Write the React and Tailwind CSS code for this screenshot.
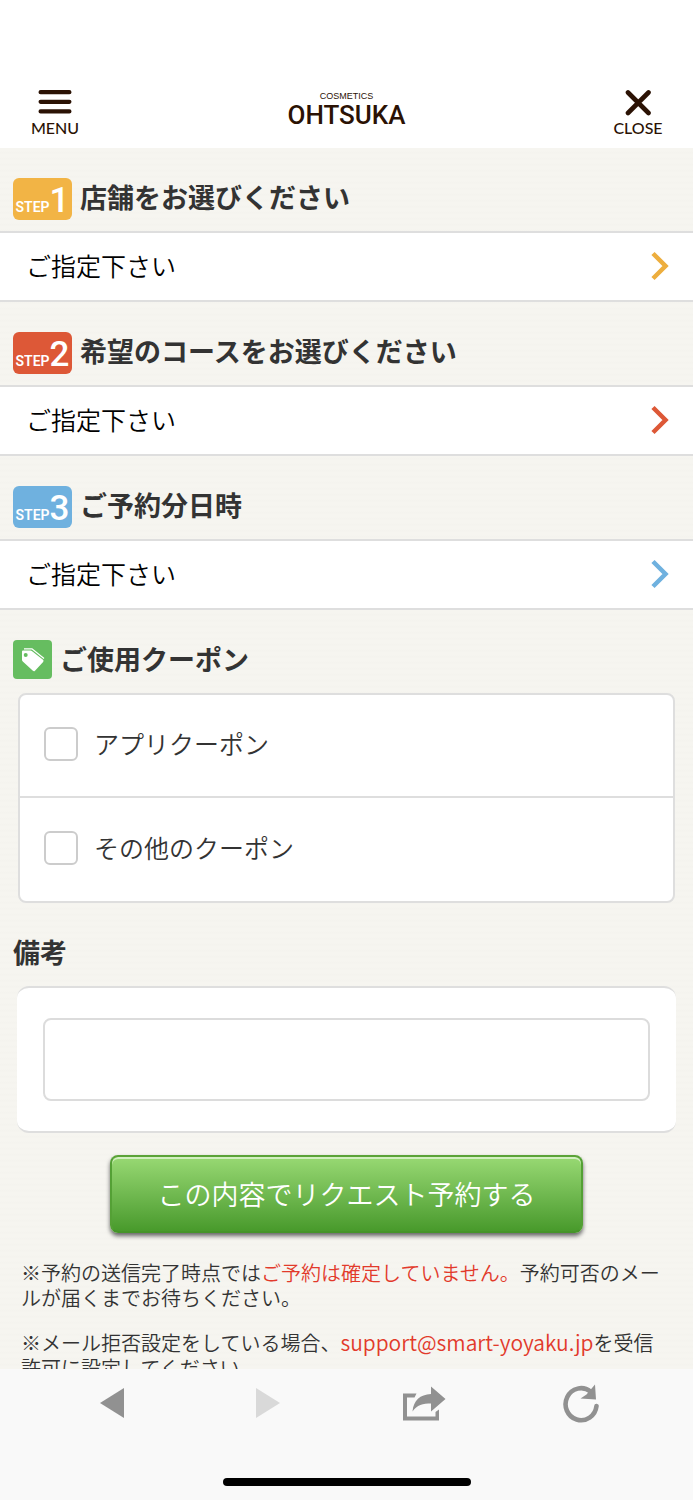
import React, { useState } from "react";

const steps = [
  { id: 1, title: "店舗をお選びください", badge: "bg-[#f2b445]", arrow: "text-[#edae3e]" },
  { id: 2, title: "希望のコースをお選びください", badge: "bg-[#dd5837]", arrow: "text-[#dd5837]" },
  { id: 3, title: "ご予約分日時", badge: "bg-[#6fb1df]", arrow: "text-[#6fb1df]" },
];

const coupons = [
  { id: "app", label: "アプリクーポン" },
  { id: "other", label: "その他のクーポン" },
];

const Header = () => (
  <header className="flex h-[148px] shrink-0 items-end justify-between bg-white px-8 pb-2 text-[#2b1204]">
    <button type="button" className="flex w-[46px] flex-col items-center">
      <svg width="34" height="28" viewBox="0 0 34 28" stroke="currentColor" strokeWidth="4.2" strokeLinecap="round">
        <path d="M2.600 4.200h28.800M2.600 13.800h28.800M2.600 23.400h28.800" />
      </svg>
      <span className="font-[Lato,sans-serif] text-[16px] leading-6 font-medium">MENU</span>
    </button>

    <a href="#top" className="flex flex-col items-center pb-[11px]">
      <span className="font-[Liberation_Sans,Arial,sans-serif] text-[9px] leading-[10px]">COSMETICS</span>
      <span className="font-[Roboto,sans-serif] text-[26px] leading-7 font-medium">OHTSUKA</span>
    </a>

    <button type="button" className="flex w-[46px] flex-col items-center">
      <svg width="34" height="28" viewBox="0 0 34 28" stroke="currentColor" strokeWidth="4.6" strokeLinecap="round">
        <path d="M7 4.500l20.500 20.500M27.500 4.500L7 25" />
      </svg>
      <span className="font-[Lato,sans-serif] text-[16px] leading-6 font-medium">CLOSE</span>
    </button>
  </header>
);

const StepSection = ({ step }) => (
  <section>
    <div className="flex h-[83px] items-center gap-2 px-[13px] pt-[18px]">
      <span
        className={`flex h-[42px] w-[59px] shrink-0 items-baseline justify-center rounded-md font-[Roboto,sans-serif] font-semibold text-white ${step.badge}`}
      >
        <span className="text-[14px]">STEP</span>
        <span className="text-[35px] leading-[45px] font-medium">{step.id}</span>
      </span>
      <h2 className="pb-1 text-[27px] leading-9 font-bold">{step.title}</h2>
    </div>
    <button
      type="button"
      className="flex h-[71px] w-full items-center justify-between border-t-2 border-b-2 border-[#dedede] bg-white pr-[23px] pb-[2px] pl-[26px] text-[25px] text-black"
    >
      <span>ご指定下さい</span>
      <svg className={step.arrow} width="20" height="30" viewBox="0 0 20 30" fill="none" stroke="currentColor" strokeWidth="4.500">
        <path d="M3 2.500L15.500 15L3 27.500" />
      </svg>
    </button>
  </section>
);

const Toolbar = () => (
  <footer className="shrink-0 bg-[#f9f9f9]">
    <nav className="flex h-[68px] items-center justify-between px-[89px] text-[#919191]">
      <button type="button" aria-label="戻る">
        <svg width="46" height="40" viewBox="0 0 46 40" fill="currentColor">
          <path d="M11 20L35 5v30z" />
        </svg>
      </button>
      <button type="button" aria-label="進む" className="text-[#d9d9d9]" disabled>
        <svg width="46" height="40" viewBox="0 0 46 40" fill="currentColor">
          <path d="M35 20L11 5v30z" />
        </svg>
      </button>
      <button type="button" aria-label="共有">
        <svg width="46" height="40" viewBox="0 0 46 40" fill="currentColor">
          <path d="M1 10.500h13.500l-2 4H5v19h28.500v-4.500l3.500-2.500V37.500H1z" />
          <path d="M29 3.500l14.500 12.500L29 28.500v-8c-8 0-14 1.500-18.500 8 1-11 7.500-17 18.500-17.500z" />
        </svg>
      </button>
      <button type="button" aria-label="再読み込み">
        <svg width="46" height="40" viewBox="0 0 46 40" fill="none">
          <path d="M32.500 8.500A15.500 16 0 1 0 38.500 23" stroke="currentColor" strokeWidth="4.600" strokeLinecap="round" />
          <path d="M37 1.500l1 15-15.500-1 6-4z" fill="currentColor" />
        </svg>
      </button>
    </nav>
    <div className="flex h-[63px] items-end justify-center pb-[14px]">
      <div className="h-2 w-[248px] rounded-full bg-black" />
    </div>
  </footer>
);

export default function App() {
  const [checked, setChecked] = useState({});
  const [note, setNote] = useState("");

  const toggle = (id) => setChecked({ ...checked, [id]: !checked[id] });

  return (
    <div
      lang="ja"
      className="flex h-screen flex-col bg-[#f5f4ef] font-['Noto_Sans_CJK_JP',sans-serif] font-[350] text-[#333]"
    >
      <Header />

      <main className="min-h-0 flex-1 overflow-y-auto bg-[repeating-linear-gradient(0deg,#f6f5f0_0px,#f6f5f0_3px,#f4f3ee_4px,#f6f5f0_6px)] [scrollbar-width:none]">
        {steps.map((step) => (
          <StepSection key={step.id} step={step} />
        ))}

        {/* Coupons */}
        <section>
          <div className="flex h-[83px] items-center gap-2 px-[13px] pt-4">
            <span className="flex size-[39px] shrink-0 items-center justify-center rounded bg-[#66bd60]">
              <svg width="24" height="24" viewBox="0 0 24 24">
                <path d="M3 .8h8l12 9.600" fill="none" stroke="#fff" strokeWidth="1.300" />
                <path
                  fill="#fff"
                  fillRule="evenodd"
                  d="M2 2.500h7.500a2 2 0 0 1 1.300.5L22 11.800a1.500 1.500 0 0 1 .1 2.100L14 22.700a1.500 1.500 0 0 1-2.100.1L1.800 13.500A2 2 0 0 1 1 12V3.500a1 1 0 0 1 1-1zM4.700 5a2 2 0 1 0 0 4 2 2 0 0 0 0-4z"
                />
              </svg>
            </span>
            <h2 className="pb-[2px] text-[27px] leading-9 font-bold">ご使用クーポン</h2>
          </div>
          <div className="mx-[18px] divide-y-2 divide-[#dedede] rounded-lg border-2 border-[#dedede] bg-white">
            {coupons.map((coupon) => (
              <label key={coupon.id} className="flex h-[103px] items-center gap-4 px-6 pb-[3px] text-[25px]">
                <input
                  type="checkbox"
                  checked={!!checked[coupon.id]}
                  onChange={() => toggle(coupon.id)}
                  className="size-[34px] shrink-0 appearance-none rounded-md border-2 border-[#cccccc] bg-white checked:bg-[#66bd60]"
                />
                {coupon.label}
              </label>
            ))}
          </div>
        </section>

        {/* Remarks */}
        <section>
          <h2 className="px-[13px] pt-[31px] pb-4 text-[27px] leading-9 font-bold">
            <label htmlFor="note">備考</label>
          </h2>
          <div className="mx-[17px] flex rounded-xl border-y-2 border-[#dedede] bg-white px-[26px] py-[30px]">
            <textarea
              id="note"
              value={note}
              onChange={(e) => setNote(e.target.value)}
              className="h-[83px] w-full resize-none rounded-lg border-2 border-[#dcdcdc] bg-white p-3 text-[25px]"
            />
          </div>
        </section>

        <div className="px-[110px] pt-[22px]">
          <button
            type="button"
            className="h-[78px] w-full rounded-lg border-2 border-t-[#5ba338] border-r-[#54a035] border-b-[#459429] border-l-[#54a035] bg-linear-to-b from-[#98d973] to-[#489a2b] text-[27px] text-white shadow-[inset_0_2px_0_#d3f0c1,0_3px_4px_#666]"
          >
            この内容でリクエスト予約する
          </button>
        </div>

        <div className="space-y-5 pt-[27px] pr-7 pl-[21px] text-[20px] leading-[25px]">
          <p>
            ※予約の送信完了時点では<span className="text-[#e23a2b]">ご予約は確定していません。</span>
            予約可否のメールが届くまでお待ちください。
          </p>
          <p>
            ※メール拒否設定をしている場合、
            <a href="mailto:support@smart-yoyaku.jp" className="text-[21px] leading-none text-[#e23a2b]">
              support@smart-yoyaku.jp
            </a>
            を受信許可に設定してください。
          </p>
        </div>
      </main>

      <Toolbar />
    </div>
  );
}
